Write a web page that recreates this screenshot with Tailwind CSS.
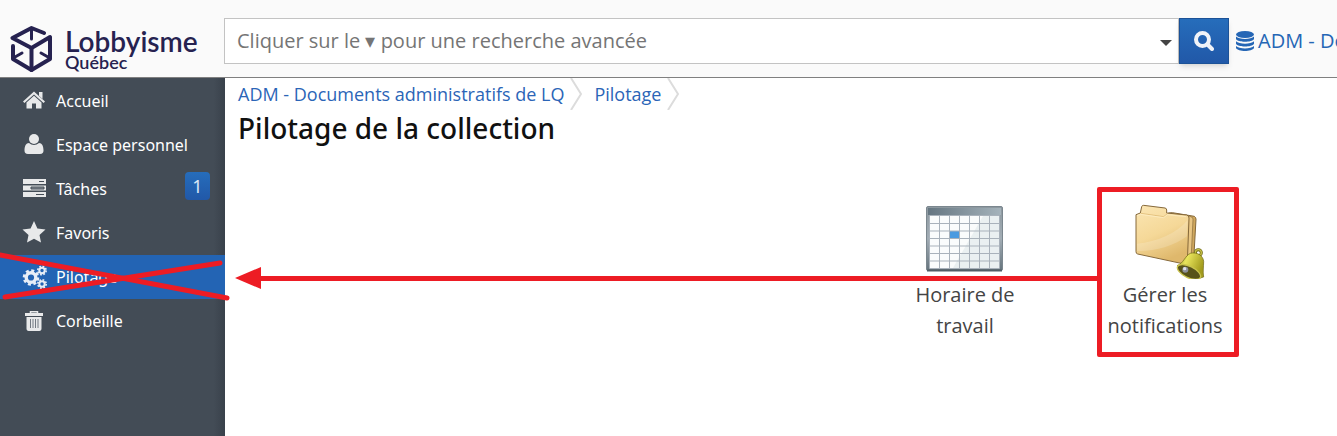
<!DOCTYPE html>
<html lang="fr">
<head>
    <meta charset="UTF-8">
    <meta name="viewport" content="width=device-width, initial-scale=1.0">
    <title>Pilotage de la collection</title>
    <script src="https://cdn.jsdelivr.net/npm/@tailwindcss/browser@4"></script>
</head>
<body class="flex min-h-screen flex-col overflow-x-hidden bg-white font-['Open_Sans','Noto_Sans',sans-serif]">

    <!-- Top bar -->
    <header class="flex h-[78px] items-start overflow-hidden border-b border-[#808080] bg-[#fafafa]">
        <a href="#" class="flex w-56 shrink-0 gap-3 pl-[9px] pt-6 text-[#262250]">
            <svg class="h-12 w-11" viewBox="0 0 44 48" fill="none" stroke="currentColor" stroke-width="4" stroke-linejoin="round" stroke-linecap="round">
                <path d="M35 9 22.500 4 3.500 14 22.500 24 41 13V35L22.500 46 4 35V22"/>
                <path d="M22.500 24V46"/>
                <path stroke-width="3" d="M22.500 6V15M13 29 6 33M32 29 39 33"/>
            </svg>
            <span class="flex flex-col pt-1 font-['Lato',sans-serif] font-semibold">
                <span class="text-[28px] leading-[26px]">Lobbyisme</span>
                <span class="text-lg leading-4">Québec</span>
            </span>
        </a>

        <form class="mt-[18px] flex h-[46px] min-w-0 flex-1">
            <label for="search" class="sr-only">Recherche</label>
            <div class="flex min-w-0 flex-1 border border-[#c3c3c3] bg-white">
                <input id="search" type="text" placeholder="Cliquer sur le ▾ pour une recherche avancée" class="min-w-0 flex-1 px-3 text-xl text-[#444] outline-none placeholder:text-[#757575]">
                <button type="button" aria-label="Recherche avancée" class="flex w-6 items-center justify-center pt-1 text-[#444]">
                    <svg class="h-[6px] w-3" viewBox="0 0 12 6" fill="currentColor"><path d="M0 0h12L6 6z"/></svg>
                </button>
            </div>
            <button type="submit" aria-label="Rechercher" class="flex w-[50px] items-center justify-center border border-[#1c5297] bg-linear-to-b from-[#266dbb] to-[#2158a8] text-[#f0f3f8] shadow-md">
                <svg class="size-5" viewBox="0 0 20 20" fill="none" stroke="currentColor"><circle cx="8.500" cy="8.500" r="6.500" stroke-width="4"/><path d="M13.500 13.500 18 18" stroke-width="4" stroke-linecap="round"/></svg>
            </button>
        </form>

        <a href="#" class="mt-[18px] flex h-[46px] w-[108px] shrink-0 items-center gap-1 overflow-hidden pl-[7px] text-xl whitespace-nowrap text-[#2566b5]">
            <svg class="h-5 w-[18px] shrink-0" viewBox="0 0 18 20" fill="currentColor">
                <ellipse cx="9" cy="3.500" rx="9" ry="3.500"/>
                <path d="M0 5.500c3 3.300 15 3.300 18 0v2.500c-2 3.700-16 3.700-18 0zM0 10.200c3 3.300 15 3.300 18 0v2.500c-2 3.700-16 3.700-18 0zM0 14.900c3 3.300 15 3.300 18 0v2c-2 4-16 4-18 0z"/>
            </svg>
            <span>ADM - Documents</span>
        </a>
    </header>

    <div class="flex flex-1">
        <!-- Side menu -->
        <nav class="w-[225px] shrink-0 bg-[#434c56] bg-linear-to-r from-[#434c56] from-95% to-[#39414b] pt-px font-['Noto_Sans','Open_Sans',sans-serif] text-base text-white">
            <a href="#" class="flex h-11 items-center gap-2 px-[22px]">
                <svg class="size-6 text-[#e8e9ea]" viewBox="0 0 24 24" fill="currentColor">
                    <path d="M1 12.500 12 2.500 23 12.500l-1.400 1.600L12 5.500 2.400 14.100z"/>
                    <path d="M17 3h3.500v7L17 6.800zM12 6.800l7.500 6.700v6H14v-5h-4v5H4.500v-6z"/>
                </svg>
                <span class="pl-[2px]">Accueil</span>
            </a>
            <a href="#" class="flex h-11 items-center gap-2 px-[22px]">
                <svg class="size-6 text-[#e8e9ea]" viewBox="0 0 24 24" fill="currentColor">
                    <circle cx="12" cy="6" r="5"/>
                    <path d="M7 10c3 2.500 7 2.500 10 0 3 0 4.500 3 4.500 7.500 0 2-1 3.500-3.500 3.500H6c-2.500 0-3.500-1.500-3.500-3.500C2.500 13 4 10 7 10z"/>
                </svg>
                <span class="pl-[2px]">Espace personnel</span>
            </a>
            <a href="#" class="flex h-11 items-center gap-2 pl-[22px] pr-[15px]">
                <svg class="size-6 text-[#e8e9ea]" viewBox="0 0 24 24">
                    <path fill="currentColor" d="M1 2h23v5H1zM1 8.500h23v5H1zM1 15h23v5H1z"/>
                    <path stroke="#434c56" d="M17 4.500h5M14 17.500h8"/>
                    <path fill="#8a9097" stroke="#434c56" d="M9 10h13v2H9z"/>
                </svg>
                <span class="pl-[2px]">Tâches</span>
                <span class="mb-[6px] ml-auto flex h-7 w-[25px] items-center justify-center rounded bg-linear-to-b from-[#266dbb] to-[#2158a8] text-lg text-[#d9e6f5]">1</span>
            </a>
            <a href="#" class="flex h-11 items-center gap-2 px-[22px]">
                <svg class="size-6 text-[#e8e9ea]" viewBox="0 0 24 24" fill="currentColor">
                    <path d="m12 0 3.400 7.500 8.100 1-6 5.500L19 21.500 12 17.700 5 21.500 6.500 14l-6-5.500 8.100-1z"/>
                </svg>
                <span class="pl-[2px]">Favoris</span>
            </a>
            <a href="#" class="relative flex h-11 items-center gap-2 bg-[#2364b4] px-[22px]">
                <svg class="size-6 overflow-visible text-[#e8eef7]" viewBox="0 0 24 24" fill="none" stroke="currentColor">
                    <circle cx="9" cy="12.500" r="4.800" stroke-width="3.400"/>
                    <circle cx="9" cy="12.500" r="7" stroke-width="2.600" stroke-dasharray="3 2.498"/>
                    <circle cx="20" cy="5.500" r="2.700" stroke-width="2"/>
                    <circle cx="20" cy="5.500" r="4.200" stroke-width="1.600" stroke-dasharray="1.800 1.499"/>
                    <circle cx="20" cy="19" r="2.700" stroke-width="2"/>
                    <circle cx="20" cy="19" r="4.200" stroke-width="1.600" stroke-dasharray="1.800 1.499"/>
                </svg>
                <span class="pl-[2px]">Pilotage</span>
                <svg class="pointer-events-none absolute top-0 left-0 h-11 w-[225px] overflow-visible" viewBox="0 0 225 44" fill="none" stroke="#ed1c24" stroke-width="5" stroke-linecap="round">
                    <path d="M0 0 227 43M5 42 220 8"/>
                </svg>
            </a>
            <a href="#" class="flex h-11 items-center gap-2 px-[22px]">
                <svg class="size-6 text-[#e8e9ea]" viewBox="0 0 24 24">
                    <path fill="none" stroke="currentColor" stroke-width="1.500" d="M8.500 4.500V2.700h7v1.800"/>
                    <path fill="currentColor" d="M3 4h18v3H3zM4.500 8h15v11.500c0 1.500-.7 2.500-2.200 2.500H6.700c-1.500 0-2.200-1-2.200-2.500z"/>
                    <path stroke="#737a82" stroke-width="1" d="M8.500 10v9M11 10v9M13.500 10v9M16 10v9"/>
                </svg>
                <span class="pl-[2px]">Corbeille</span>
            </a>
        </nav>

        <!-- Content -->
        <main class="relative min-w-0 flex-1">
            <div class="flex h-8 items-center gap-[6px] pl-[13px] text-lg text-[#2b65b7]">
                <a href="#">ADM - Documents administratifs de LQ</a>
                <svg class="mr-[6px] h-8 w-3" viewBox="0 0 12 32" fill="none" stroke="#dcdcdc" stroke-width="2"><path d="M1 0 11 16 1 32"/></svg>
                <a href="#">Pilotage</a>
                <svg class="h-8 w-3" viewBox="0 0 12 32" fill="none" stroke="#dcdcdc" stroke-width="2"><path d="M1 0 11 16 1 32"/></svg>
            </div>
            <h1 class="pl-[13px] font-['Noto_Sans','Open_Sans',sans-serif] text-[28px] leading-9 font-medium text-[#111]">Pilotage de la collection</h1>

            <div class="flex justify-end gap-16 pr-[104px] pt-[41px] text-xl leading-[31px] text-[#444]">
                <a href="#" class="flex w-[136px] flex-col items-center pt-4 text-center">
                    <svg class="h-[76px] w-20" viewBox="0 0 80 76">
                        <defs>
                            <linearGradient id="frame" x2="0" y2="1"><stop stop-color="#8c979e"/><stop offset=".5" stop-color="#a2adb5"/><stop offset="1" stop-color="#66747d"/></linearGradient>
                            <linearGradient id="bar" x2="1"><stop stop-color="#657681"/><stop offset="1" stop-color="#a5b3bb"/></linearGradient>
                        </defs>
                        <rect x="1.500" y="3.500" width="76" height="64" rx="1.500" fill="url(#frame)" stroke="#7b878f"/>
                        <path fill="url(#bar)" d="M3 5h73v7H3z"/>
                        <path fill="#fafcfc" d="M5 13h69v52H5z"/>
                        <path fill="#eaf0f1" d="M74 13v52H28L58 13z"/>
                        <path fill="#4b9be0" d="M24.500 28h10v7.500h-10z"/>
                        <path fill="none" stroke="#a9b2bb" d="M4.500 12.500h70v53h-70zM14.500 13v52M24.500 13v52M34.500 13v52M44.500 13v52M54.500 13v52M64.500 13v52M4 20.500h70M4 28h70M4 35.500h70M4 43h70M4 50.500h70M4 58h70"/>
                        <path fill="none" stroke="#505e67" stroke-width="2" d="M2 67.500h75"/>
                    </svg>
                    <span class="w-[120px]">Horaire de travail</span>
                </a>
                <a href="#" class="relative flex w-[136px] flex-col items-center pt-4 text-center">
                    <svg class="h-[76px] w-20" viewBox="0 15 240 228" stroke-linejoin="round" stroke-width="3">
                        <defs>
                            <linearGradient id="folder" x2=".4" y2="1"><stop stop-color="#fbe6b4"/><stop offset=".55" stop-color="#f5d898"/><stop offset="1" stop-color="#dfb86c"/></linearGradient>
                            <linearGradient id="bell" x2="1" y2=".4"><stop stop-color="#8d8820"/><stop offset=".4" stop-color="#e9e55c"/><stop offset="1" stop-color="#a39c1e"/></linearGradient>
                        </defs>
                        <path fill="#cfa75d" stroke="#85683a" d="M130 45 142 44l66 11q5 3 5 9l-7 122-22 8z"/>
                        <path fill="#e9c684" stroke="#85683a" stroke-width="2" d="m185 52 15 5q4 3 4 8l-6 124-14 6z"/>
                        <path fill="url(#folder)" stroke="#85683a" d="M33 50l13-5 4-19q1-4 6-4l64 8q5 1 5 6v9l60 6q7 2 7 9l-5 134q0 5-5 5L38 168q-5-1-5-7z"/>
                        <path fill="none" stroke="#d9b36b" stroke-width="2" d="m48 46 68 10 11-9"/>
                        <path fill="none" stroke="#fff2cc" stroke-width="2" d="m36 53 10-4 70 10 11-9 56 6"/>
                        <path fill="#fff" opacity=".18" d="M36 137c60-5 118-30 152-70l-2 48c-40 30-100 46-150 44z"/>
                        <circle cx="220" cy="164" r="9" fill="none" stroke="#6f6915" stroke-width="9"/>
                        <circle cx="220" cy="164" r="9" fill="none" stroke="#c9c348" stroke-width="4"/>
                        <path fill="url(#bell)" stroke="#6b6512" stroke-width="2" d="M156 203c20-7 24-30 40-37 20-5 38 6 40 24 0 16-3 30 0 47l-14 4z"/>
                        <ellipse cx="192" cy="222" rx="38" ry="17" transform="rotate(26 192 222)" fill="#57521a" stroke="#c9c34e" stroke-width="4"/>
                        <circle cx="181" cy="215" r="9" fill="#8d909b"/>
                        <circle cx="179" cy="212" r="5" fill="#dfe1e8"/>
                    </svg>
                    <span class="w-[120px]">Gérer les notifications</span>
                    <span class="pointer-events-none absolute top-0 -right-[6px] left-0 h-[170px] rounded-xs border-[5px] border-[#ed1c24]"></span>
                </a>
            </div>

            <!-- Arrow from the notifications tile to the menu -->
            <div class="pointer-events-none absolute top-[189px] right-[240px] left-[10px] flex items-center">
                <svg class="h-[22px] w-[26px] shrink-0" viewBox="0 0 26 22" fill="#ed1c24"><path d="M0 11 26 0v22z"/></svg>
                <span class="h-[5px] flex-1 bg-[#ed1c24]"></span>
            </div>
        </main>
    </div>

</body>
</html>
